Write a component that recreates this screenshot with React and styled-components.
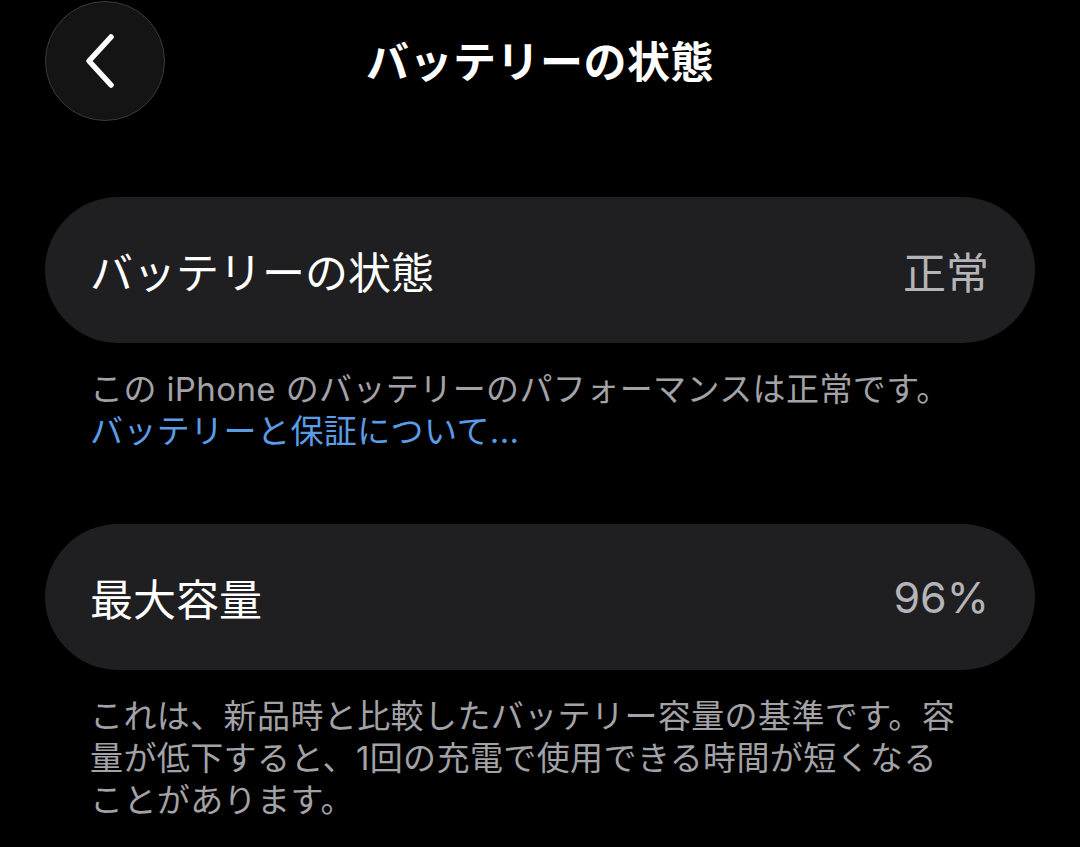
import React from 'react'
import styled, { createGlobalStyle } from 'styled-components'

const Global = createGlobalStyle`
  html, body {
    margin: 0;
    background: #000;
  }
  body {
    font-family: Inter, "Noto Sans CJK JP", sans-serif;
    -webkit-font-smoothing: antialiased;
  }
`

const Screen = styled.div`
  width: 1080px;
  min-height: 847px;
  box-sizing: border-box;
  padding: 1px 45px 0;
  background: #000;
  color: #fff;
`

const Header = styled.header`
  display: grid;
  grid-template-columns: 120px 1fr 120px;
  align-items: center;
  height: 120px;
  margin-bottom: 76px;
`

const BackButton = styled.button`
  width: 120px;
  height: 120px;
  border-radius: 50%;
  box-sizing: border-box;
  border: 1.5px solid #3a3a3c;
  background: #141414;
  display: flex;
  align-items: center;
  justify-content: center;
  padding: 0 8px 0 0;
  cursor: pointer;
`

const Title = styled.h1`
  margin: 0 0 4px;
  text-align: center;
  font-size: 43px;
  font-weight: 700;
  letter-spacing: 0.5px;
`

const Row = styled.div`
  display: flex;
  align-items: center;
  justify-content: space-between;
  height: 146px;
  padding: 0 46px 0 45px;
  border-radius: 73px;
  background: #1f1f21;
  box-sizing: border-box;
`

const Label = styled.span`
  font-size: 43px;
  font-weight: 400;
  color: #fff;
`

const Value = styled.span`
  font-size: 43px;
  color: #b4b4b9;
`

const Note = styled.p`
  margin: 25px 0 ${p => p.$after || 0}px;
  padding: 0 65px 0 45px;
  font-size: 33px;
  letter-spacing: 0.4px;
  line-height: 42px;
  color: #a2a2a7;
`

const Link = styled.a`
  color: #5a9ce6;
  text-decoration: none;
  display: block;
`

const Chevron = () => (
  <svg width="40" height="56" viewBox="0 0 40 56" fill="none">
    <path d="M30 4 L8 28 L30 52" stroke="#fff" strokeWidth="5.5" strokeLinecap="round" strokeLinejoin="round" />
  </svg>
)

export default function App() {
  return (
    <Screen>
      <Global />
      <Header>
        <BackButton aria-label="戻る">
          <Chevron />
        </BackButton>
        <Title>バッテリーの状態</Title>
        <span />
      </Header>

      <Row>
        <Label>バッテリーの状態</Label>
        <Value>正常</Value>
      </Row>
      <Note $after={72}>
        この iPhone のバッテリーのパフォーマンスは正常です。
        <Link href="#">バッテリーと保証について...</Link>
      </Note>

      <Row>
        <Label>最大容量</Label>
        <Value>96%</Value>
      </Row>
      <Note>
        これは、新品時と比較したバッテリー容量の基準です。容量が低下すると、1回の充電で使用できる時間が短くなることがあります。
      </Note>
    </Screen>
  )
}
